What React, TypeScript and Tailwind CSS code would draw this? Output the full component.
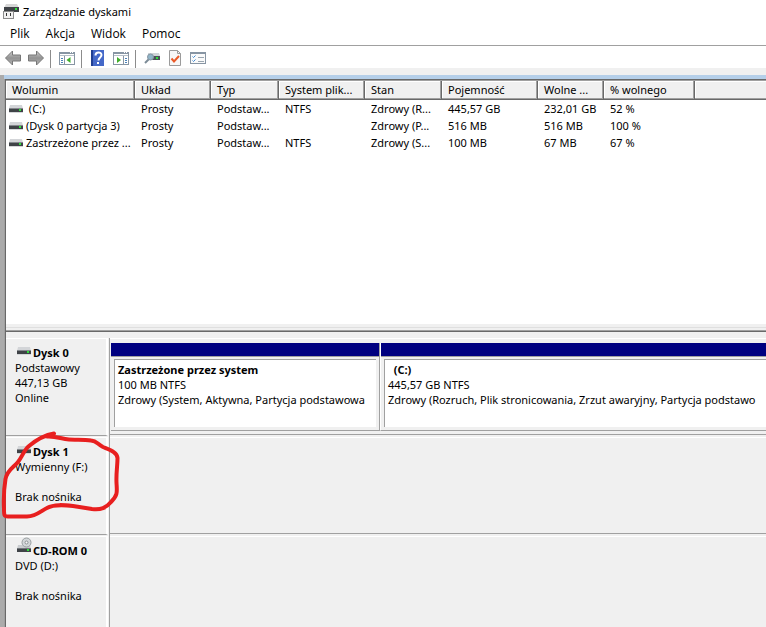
import type { ReactNode } from 'react';

const menus = ['Plik', 'Akcja', 'Widok', 'Pomoc'];

const columns = [
    { label: 'Wolumin', width: 'w-[129px]' },
    { label: 'Układ', width: 'w-[76px]' },
    { label: 'Typ', width: 'w-[68px]' },
    { label: 'System plik...', width: 'w-[86px]' },
    { label: 'Stan', width: 'w-[77px]' },
    { label: 'Pojemność', width: 'w-[96px]' },
    { label: 'Wolne ...', width: 'w-[66px]' },
    { label: '% wolnego', width: 'w-[91px]' },
];

const volumes = [
    [' (C:)', 'Prosty', 'Podstaw...', 'NTFS', 'Zdrowy (R...', '445,57 GB', '232,01 GB', '52 %'],
    ['(Dysk 0 partycja 3)', 'Prosty', 'Podstaw...', '', 'Zdrowy (P...', '516 MB', '516 MB', '100 %'],
    ['Zastrzeżone przez ...', 'Prosty', 'Podstaw...', 'NTFS', 'Zdrowy (S...', '100 MB', '67 MB', '67 %'],
];

const Icon = ({ children }: { children: ReactNode }) => (
    <svg width="16" height="16" viewBox="0 0 16 16" aria-hidden="true">
        {children}
    </svg>
);

const DriveIcon = ({ led = true }: { led?: boolean }) => (
    <svg width="14" height="8" viewBox="0 0 14 8" className="shrink-0" aria-hidden="true">
        <path d="M1 0h12l1 4H0z" fill="#d3d5d8" />
        <rect y="3" width="14" height="4" fill="#3f4347" />
        <rect y="3" width="14" height="1" fill="#85898d" />
        <rect y="7" width="14" height="1" fill="#d5d7d9" />
        {led && <rect x="10" y="4" width="2" height="2" fill="#2fe03c" />}
    </svg>
);

const DiscIcon = () => (
    <svg width="15" height="16" viewBox="0 0 15 16" className="shrink-0" aria-hidden="true">
        <path d="M1 8h12l1 4H0z" fill="#c9cccf" />
        <circle cx="9.500" cy="5.500" r="4.500" fill="#d3d7d9" stroke="#9a9fa2" />
        <circle cx="9.500" cy="5.500" r="1.500" fill="#f8f8f8" stroke="#8b9093" />
        <rect y="11" width="14" height="4" fill="#3f4347" />
        <rect y="11" width="14" height="1" fill="#73777b" />
        <rect x="10" y="12" width="2" height="2" fill="#2fe03c" />
    </svg>
);

const AppIcon = () => (
    <Icon>
        <path d="M3 0h11l2 4H1z" fill="#d6d6d6" />
        <rect x="1" y="3" width="15" height="5" fill="#3f4347" />
        <rect x="12" y="4" width="2" height="2" fill="#2fe03c" />
        <rect y="7" width="11" height="8" fill="#8b8b8b" />
        <rect x="1" y="8" width="9" height="6" fill="#f1f1f1" />
        <path d="M3 9h1v3H3zM7 9h1v3H7z" fill="#333" />
    </Icon>
);

const ArrowIcon = ({ flip = false }: { flip?: boolean }) => (
    <Icon>
        <defs>
            <linearGradient id="arrow" x1="0" y1="0" x2="0" y2="1">
                <stop offset="0" stopColor="#d0d0d0" />
                <stop offset="0.5" stopColor="#939393" />
                <stop offset="1" stopColor="#b4b4b4" />
            </linearGradient>
        </defs>
        <path
            d={flip ? 'M15.500 8 8.500 1v4h-8v6h8v4z' : 'M.500 8l7-7v4h8v6h-8v4z'}
            fill="url(#arrow)"
            stroke="#777"
            strokeLinejoin="round"
        />
    </Icon>
);

const PaneIcon = ({ flip = false }: { flip?: boolean }) => (
    <Icon>
        <rect x="0.500" y="2.500" width="15" height="12" fill="#fff" stroke="#8795a3" />
        <path d="M0 2h16v2H0z" fill="#8795a3" />
        <path d="M11 2h1v1h-1zM13 2h1v1h-1z" fill="#fff" />
        <path d="M1 5h14v1H1z" fill="#b6c0c9" />
        <path d={flip ? 'M10 6h1v8h-1z' : 'M5 6h1v8H5z'} fill="#8795a3" />
        <path
            d={flip ? 'M12 8h2v1h-2zM12 10h2v1h-2zM12 12h2v1h-2z' : 'M2 8h2v1H2zM2 10h2v1H2zM2 12h2v1H2z'}
            fill="#4a82b8"
        />
        <path d={flip ? 'M4 7l4 3-4 3z' : 'M11.500 7l-4 3 4 3z'} fill="#3fae2a" />
    </Icon>
);

const HelpIcon = () => (
    <Icon>
        <rect x="1" width="13" height="16" fill="#4468c8" />
        <rect x="1" width="2" height="16" fill="#213f92" />
        <path d="M5.500 5.500c0-4 6-4 6-.5 0 2.500-3 2.500-3 5.500" fill="none" stroke="#fff" strokeWidth="2" />
        <rect x="7" y="12" width="2" height="2" fill="#fff" />
    </Icon>
);

const RescanIcon = () => (
    <Icon>
        <path d="M4 3h11l1 3H4z" fill="#cfd4d8" />
        <rect x="4" y="6" width="12" height="4" fill="#4a5257" />
        <path d="M12 7h2v2h-2z" fill="#2fe03c" />
        <path d="M5 9 1 13" stroke="#7c8b97" strokeWidth="2" />
        <circle cx="6.500" cy="7" r="3" fill="#8fb4c8" stroke="#8796a3" />
    </Icon>
);

const CheckPageIcon = () => (
    <Icon>
        <path d="M2.500.5h8l3 3v12h-11z" fill="#f7f7f7" stroke="#9b9b9b" />
        <path d="M10.500.5v3h3" fill="none" stroke="#9b9b9b" />
        <path d="M4.500 8.500l2.500 3 5-5.500" fill="none" stroke="#ea5a28" strokeWidth="2" />
    </Icon>
);

const OptionsIcon = () => (
    <Icon>
        <rect x="0.500" y="2.500" width="15" height="11" fill="#fafafa" stroke="#8795a3" />
        <path d="M0 2h16v2H0z" fill="#8795a3" />
        <path d="M2.500 6.500l1 1 2-2M2.500 10.500l1 1 2-2" fill="none" stroke="#3a87d0" />
        <path d="M8 7h6v1H8zM8 11h6v1H8z" fill="#9aa6b0" />
    </Icon>
);

const tools = [
    [
        { label: 'Wstecz', icon: <ArrowIcon /> },
        { label: 'Dalej', icon: <ArrowIcon flip /> },
    ],
    [{ label: 'Pokaż drzewo konsoli', icon: <PaneIcon /> }],
    [
        { label: 'Pomoc', icon: <HelpIcon /> },
        { label: 'Pokaż okienko akcji', icon: <PaneIcon flip /> },
    ],
    [
        { label: 'Skanuj ponownie dyski', icon: <RescanIcon /> },
        { label: 'Właściwości', icon: <CheckPageIcon /> },
        { label: 'Opcje', icon: <OptionsIcon /> },
    ],
];

const VolumeTable = () => (
    <table className="w-full table-fixed border-separate border-spacing-0 text-left">
        <thead>
            <tr className="h-[19px] bg-[#f0f0f0]">
                {columns.map((col) => (
                    <th
                        key={col.label}
                        className={`${col.width} border-r border-b border-[#696969] p-0 pl-[6px] font-normal whitespace-nowrap shadow-[inset_-1px_-1px_#a0a0a0,inset_1px_1px_#fff]`}
                    >
                        {col.label}
                    </th>
                ))}
                <td className="border-b border-[#696969] p-0 shadow-[inset_0_-1px_#a0a0a0,inset_1px_1px_#fff]" />
            </tr>
        </thead>
        <tbody>
            {volumes.map((row) => (
                <tr key={row[0]} className="h-[17px]">
                    {row.map((cell, i) => (
                        <td key={i} className={`p-0 whitespace-pre ${i === 0 ? 'pl-[3px]' : 'pl-[6px]'}`}>
                            {i === 0 ? (
                                <span className="flex items-center gap-[3px]">
                                    <DriveIcon />
                                    {cell}
                                </span>
                            ) : (
                                cell
                            )}
                        </td>
                    ))}
                </tr>
            ))}
        </tbody>
    </table>
);

type DiskRowProps = { name: string; icon: ReactNode; lines: string[]; children?: ReactNode; overlay?: ReactNode };

const DiskRow = ({ name, icon, lines, children, overlay }: DiskRowProps) => (
    <section className="relative flex h-[99px]">
        <div className="mb-px w-[102px] shrink-0 border-t border-r-2 border-b border-t-white border-r-white border-b-[#a0a0a0] pt-[6px] pl-[9px] leading-[15px]">
            <h2 className="flex h-[15px] items-end gap-[2px] pl-[2px] font-bold whitespace-nowrap">
                <span className="flex w-[14px] shrink-0 pb-[5px]">{icon}</span>
                {name}
            </h2>
            {lines.map((line, i) => (
                <p key={i} className="h-[15px] whitespace-nowrap">
                    {line}
                </p>
            ))}
        </div>
        <div className="ml-px flex min-w-0 flex-1 border-l border-[#a0a0a0]">
            <div className="mb-[2px] flex min-w-0 flex-1 border-t border-b border-t-white border-b-[#a0a0a0] pt-[4px] pb-[3px] pl-px">
                {children}
            </div>
        </div>
        {overlay}
    </section>
);

type PartitionProps = { name: string; size: string; status: string; className: string };

const Partition = ({ name, size, status, className }: PartitionProps) => (
    <div className={`flex min-w-0 flex-col border-b border-b-[#a0a0a0] ${className}`}>
        <div className="h-[14px] border-b border-[#a0a0a0] bg-[#000080]" />
        <div className="mx-[3px] mt-[2px] mb-[3px] flex-1 border-t border-l border-[#a0a0a0] bg-white pt-[2px] pl-[3px] leading-[15px] whitespace-pre">
            <h3 className="font-bold">{name}</h3>
            <p>{size}</p>
            <p>{status}</p>
        </div>
    </div>
);

const RedMarker = () => (
    <svg
        width="122"
        height="92"
        viewBox="2 428 122 92"
        className="pointer-events-none absolute -top-[8px] -left-[5px]"
        aria-hidden="true"
    >
        <path
            d="M55 432.500C46 434 36 440 30 445C25 449 23 456 19 461C15 466 8 469 6.500 478C5 487 4.500 498 5 508C5 514 5 515.500 9 515.500L28 515.500C37 515.500 42 510 48 507C55 503 65 504 74 505L93 508C102 509 107 507 112 501C119 494 118 491 117.500 482C117 472 118.500 465 118.500 457C118 451 111 449 104 446C98 443 98 440 92 439.500C84 438 77 439 70 438.500C62 438 58 435 48 435.500"
            fill="none"
            stroke="#e81f1f"
            strokeWidth="4"
            strokeLinecap="round"
            strokeLinejoin="round"
        />
    </svg>
);

const App = () => {
    return (
        <div className="flex min-h-screen flex-col overflow-hidden bg-[#f0f0f0] font-['Noto_Sans','Open_Sans',sans-serif] text-[11px] leading-[16px] text-black">
            <header className="bg-white">
                <div className="flex h-[24px] items-center gap-1 pl-[3px]">
                    <AppIcon />
                    <h1>Zarządzanie dyskami</h1>
                </div>
                <nav className="flex h-[21px] items-start pt-[2px] pl-[2px] font-['Open_Sans','Noto_Sans',sans-serif] text-[12px]">
                    {menus.map((menu) => (
                        <button key={menu} type="button" className="px-2">
                            {menu}
                        </button>
                    ))}
                </nav>
            </header>

            <div role="toolbar" className="flex h-[23px] border-t border-[#a0a0a0] bg-white pt-[4px] pl-[5px]">
                {tools.map((group, i) => (
                    <div
                        key={i}
                        className="mr-2 flex h-[18px] gap-[7px] border-r border-[#8c8c8c] pr-[6px] last:border-r-0"
                    >
                        {group.map((tool) => (
                            <button key={tool.label} type="button" aria-label={tool.label} className="size-4">
                                {tool.icon}
                            </button>
                        ))}
                    </div>
                ))}
            </div>

            <div className="mt-[7px] flex flex-1 flex-col border-l-4 border-[#ababab] bg-[#a0a0a0]">
                <div className="h-[4px] bg-[#b5cfe9]" />
                <main className="ml-px flex flex-1 flex-col border-t border-l border-[#696969] bg-[#f0f0f0] shadow-[inset_0_1px_#a0a0a0]">
                    <div className="mt-px h-[243px] bg-white">
                        <VolumeTable />
                    </div>
                    {/* Splitter between the volume list and the disk map */}
                    <div className="flex h-[8px] flex-col justify-end border-b border-[#696969]">
                        <div className="mb-[2px] h-px bg-[#dfdfdf]" />
                        <div className="h-px bg-[#a0a0a0]" />
                    </div>
                    <div className="pt-[6px]">
                        <DiskRow name="Dysk 0" icon={<DriveIcon />} lines={['Podstawowy', '447,13 GB', 'Online']}>
                            <Partition
                                name="Zastrzeżone przez system"
                                size="100 MB NTFS"
                                status="Zdrowy (System, Aktywna, Partycja podstawowa"
                                className="w-[269px] shrink-0 border-r border-r-[#a0a0a0]"
                            />
                            <Partition
                                name="  (C:)"
                                size="445,57 GB NTFS"
                                status="Zdrowy (Rozruch, Plik stronicowania, Zrzut awaryjny, Partycja podstawo"
                                className="-mr-[3px] flex-1 border-l border-l-white"
                            />
                        </DiskRow>
                        <DiskRow
                            name="Dysk 1"
                            icon={<DriveIcon led={false} />}
                            lines={['Wymienny (F:)', '', 'Brak nośnika']}
                            overlay={<RedMarker />}
                        />
                        <DiskRow name="CD-ROM 0" icon={<DiscIcon />} lines={['DVD (D:)', '', 'Brak nośnika']} />
                    </div>
                </main>
            </div>
        </div>
    );
};

export default App;
